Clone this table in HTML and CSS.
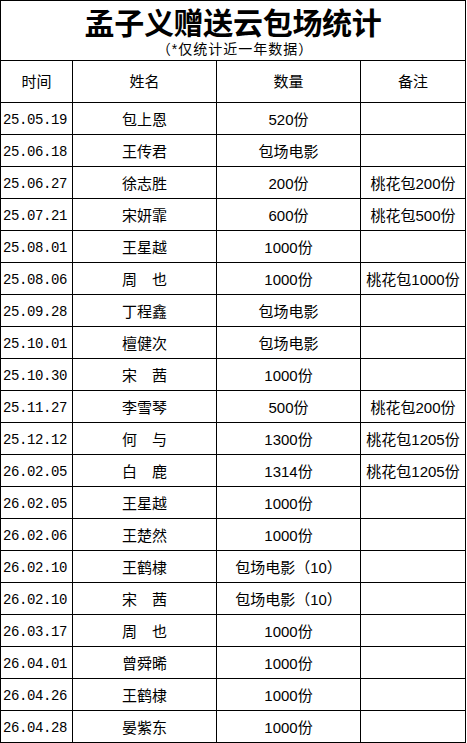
FILE: index.html
```html
<!DOCTYPE html>
<html lang="zh-CN">
<head>
<meta charset="utf-8">
<title>孟子义赠送云包场统计</title>
<link rel="stylesheet" href="styles.css">
</head>
<body>
<div class="sheet">
  <div class="cell title-cell">
    <div class="title">孟子义赠送云包场统计</div>
    <div class="subtitle">（*仅统计近一年数据）</div>
  </div>

  <div class="cell head">时间</div>
  <div class="cell head">姓名</div>
  <div class="cell head">数量</div>
  <div class="cell head">备注</div>

  <div class="cell date">25.05.19</div><div class="cell name">包上恩</div><div class="cell qty">520份</div><div class="cell note"></div>
  <div class="cell date">25.06.18</div><div class="cell name">王传君</div><div class="cell qty">包场电影</div><div class="cell note"></div>
  <div class="cell date">25.06.27</div><div class="cell name">徐志胜</div><div class="cell qty">200份</div><div class="cell note">桃花包200份</div>
  <div class="cell date">25.07.21</div><div class="cell name">宋妍霏</div><div class="cell qty">600份</div><div class="cell note">桃花包500份</div>
  <div class="cell date">25.08.01</div><div class="cell name">王星越</div><div class="cell qty">1000份</div><div class="cell note"></div>
  <div class="cell date">25.08.06</div><div class="cell name">周　也</div><div class="cell qty">1000份</div><div class="cell note">桃花包1000份</div>
  <div class="cell date">25.09.28</div><div class="cell name">丁程鑫</div><div class="cell qty">包场电影</div><div class="cell note"></div>
  <div class="cell date">25.10.01</div><div class="cell name">檀健次</div><div class="cell qty">包场电影</div><div class="cell note"></div>
  <div class="cell date">25.10.30</div><div class="cell name">宋　茜</div><div class="cell qty">1000份</div><div class="cell note"></div>
  <div class="cell date">25.11.27</div><div class="cell name">李雪琴</div><div class="cell qty">500份</div><div class="cell note">桃花包200份</div>
  <div class="cell date">25.12.12</div><div class="cell name">何　与</div><div class="cell qty">1300份</div><div class="cell note">桃花包1205份</div>
  <div class="cell date">26.02.05</div><div class="cell name">白　鹿</div><div class="cell qty">1314份</div><div class="cell note">桃花包1205份</div>
  <div class="cell date">26.02.05</div><div class="cell name">王星越</div><div class="cell qty">1000份</div><div class="cell note"></div>
  <div class="cell date">26.02.06</div><div class="cell name">王楚然</div><div class="cell qty">1000份</div><div class="cell note"></div>
  <div class="cell date">26.02.10</div><div class="cell name">王鹤棣</div><div class="cell qty">包场电影（10）</div><div class="cell note"></div>
  <div class="cell date">26.02.10</div><div class="cell name">宋　茜</div><div class="cell qty">包场电影（10）</div><div class="cell note"></div>
  <div class="cell date">26.03.17</div><div class="cell name">周　也</div><div class="cell qty">1000份</div><div class="cell note"></div>
  <div class="cell date">26.04.01</div><div class="cell name">曾舜晞</div><div class="cell qty">1000份</div><div class="cell note"></div>
  <div class="cell date">26.04.26</div><div class="cell name">王鹤棣</div><div class="cell qty">1000份</div><div class="cell note"></div>
  <div class="cell date">26.04.28</div><div class="cell name">晏紫东</div><div class="cell qty">1000份</div><div class="cell note"></div>
</div>
</body>
</html>
```

FILE: styles.css
```css
html, body {
  margin: 0;
  padding: 0;
  background: #fff;
}

body {
  font-family: "Liberation Sans", "Noto Sans CJK SC", sans-serif;
  color: #000;
  text-spacing-trim: space-all;
}

.sheet {
  display: grid;
  grid-template-columns: 71px 143px 143px 104px;
  grid-template-rows: 59px 41px repeat(20, 31px);
  gap: 1px;
  padding: 1px;
  width: 466px;
  box-sizing: border-box;
  background: #000;
}

.cell {
  background: #fff;
  display: flex;
  align-items: center;
  justify-content: center;
  font-size: 15px;
  line-height: 18px;
  padding-top: 3px;
  box-sizing: border-box;
  white-space: nowrap;
}

.title-cell {
  grid-column: 1 / -1;
  flex-direction: column;
  justify-content: flex-start;
  padding-top: 6px;
}

/* Latin primary font keeps the line boxes compact; CJK glyphs come from Noto */
.title {
  font-family: "Liberation Sans", "Noto Sans CJK SC", sans-serif;
  font-weight: 700;
  font-size: 30px;
  line-height: 34px;
  letter-spacing: -0.3px;
}

.subtitle {
  font-family: "Liberation Sans", "Noto Sans CJK SC", sans-serif;
  font-size: 14px;
  line-height: 16px;
  letter-spacing: 1px;
  padding-left: 4px;
}

.head {
  padding-top: 0;
}

.date {
  justify-content: flex-start;
  padding-left: 2px;
  font-family: "Liberation Mono", "Noto Sans CJK SC", monospace;
  font-size: 14px;
  letter-spacing: -0.4px;
}

.qty,
.note {
  font-size: 15px;
}
```
